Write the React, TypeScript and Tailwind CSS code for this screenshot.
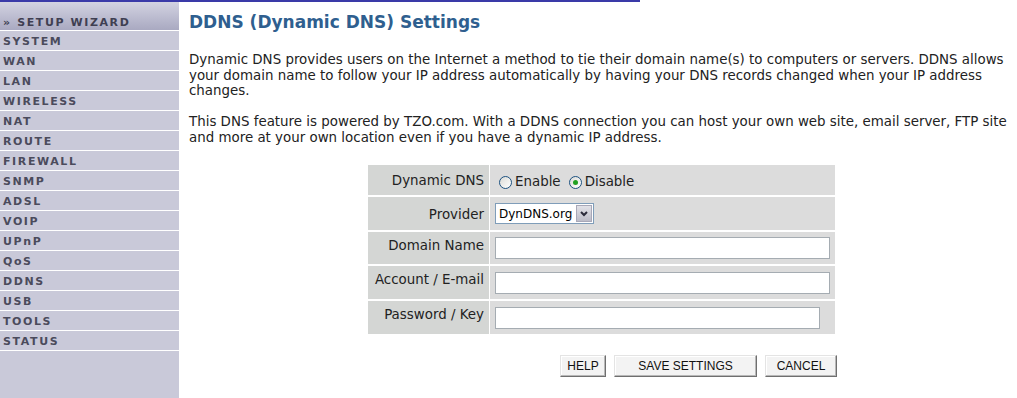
import React from "react";

const menu = [
  "SYSTEM",
  "WAN",
  "LAN",
  "WIRELESS",
  "NAT",
  "ROUTE",
  "FIREWALL",
  "SNMP",
  "ADSL",
  "VOIP",
  "UPnP",
  "QoS",
  "DDNS",
  "USB",
  "TOOLS",
  "STATUS",
];

function Radio({ checked }: { checked?: boolean }) {
  return (
    <span className="inline-flex w-[13px] h-[13px] rounded-full border border-[#1c5180] bg-gradient-to-br from-[#dcdcd7] to-white items-center justify-center mr-[3px]">
      {checked && <span className="w-[5px] h-[5px] rounded-full bg-[#21a121]" />}
    </span>
  );
}

function Btn({ label, w }: { label: string; w: string }) {
  return (
    <button
      className={`${w} h-[22px] bg-[#f3f3f3] border border-t-[#e4e4e4] border-l-[#e4e4e4] border-r-[#6f6f6f] border-b-[#6f6f6f] shadow-[inset_-1px_-1px_0_#b8b8b8,inset_1px_1px_0_#ffffff] text-[12px] text-[#111] font-['Liberation_Sans',Arial,sans-serif]`}
    >
      {label}
    </button>
  );
}

export default function App() {
  return (
    <div className="w-[1017px] h-[398px] bg-white flex font-['DejaVu_Sans',Verdana,sans-serif] overflow-hidden relative">
      <div className="absolute left-0 top-0 w-[640px] h-[2px] bg-[#3a3aa8]" />
      {/* Sidebar */}
      <aside className="w-[179px] h-full bg-[#c9c9d9] flex flex-col shrink-0">
        <div className="h-[31px] bg-gradient-to-b from-[#d6d6e4] to-[#a9a9c1] flex items-end pb-0 pl-[3px] border-b border-white">
          <span className="text-[11px] leading-[15px] font-bold tracking-[1.6px] text-[#3f3f52]">» SETUP WIZARD</span>
        </div>
        {menu.map((m) => (
          <div
            key={m}
            className="h-[20px] border-b border-white flex items-center pt-[3px] pl-[3px] text-[11px] font-bold tracking-[1.6px] text-[#4b4b5c]"
          >
            {m}
          </div>
        ))}
      </aside>

      {/* Main */}
      <main className="flex-1 pl-[10px] pt-[12px]">
        <h1 className="text-[17px] font-bold text-[#2f5f8f] leading-[20px]">DDNS (Dynamic DNS) Settings</h1>
        <p className="mt-[20px] text-[13.4px] leading-[15.5px] text-[#222] w-[828px]">
          Dynamic DNS provides users on the Internet a method to tie their domain name(s) to computers or servers. DDNS allows
          <br />
          your domain name to follow your IP address automatically by having your DNS records changed when your IP address
          <br />
          changes.
        </p>
        <p className="mt-[15.5px] text-[13.4px] leading-[15.5px] text-[#222] w-[828px]">
          This DNS feature is powered by TZO.com. With a DDNS connection you can host your own web site, email server, FTP site
          <br />
          and more at your own location even if you have a dynamic IP address.
        </p>

        <div className="ml-[179px] mt-[20px] w-[467px] flex flex-col gap-[2px] text-[13.4px] text-[#222]">
          <div className="flex h-[30px] gap-[1px]">
            <div className="w-[121px] bg-[#d4d6d4] text-right pr-[5px] pt-[6px]">Dynamic DNS</div>
            <div className="flex-1 bg-[#dcdcdc] flex items-center pl-[9px] pt-[4px]">
              <Radio />
              <span className="mr-[8px]">Enable</span>
              <Radio checked />
              <span>Disable</span>
            </div>
          </div>
          <div className="flex h-[33px] gap-[1px]">
            <div className="w-[121px] bg-[#d4d6d4] text-right pr-[5px] pt-[8px]">Provider</div>
            <div className="flex-1 bg-[#dcdcdc] flex items-center pl-[5px]">
              <div className="flex h-[21px] w-[99px] border border-[#7f9db9] bg-white items-center">
                <span className="flex-1 pl-[3px] text-[12px] text-black">DynDNS.org</span>
                <span className="w-[16px] h-[17px] mr-[1px] bg-gradient-to-b from-[#e2e2e8] to-[#bcbcc8] border border-[#a8a8b8] flex items-center justify-center">
                  <svg width="8" height="6" viewBox="0 0 8 6">
                    <path d="M1 1 L4 4 L7 1" stroke="#2a2a3a" strokeWidth="2" fill="none" />
                  </svg>
                </span>
              </div>
            </div>
          </div>
          {[
            ["Domain Name", "w-[335px]", "h-[32px]"],
            ["Account / E-mail", "w-[335px]", "h-[33px]"],
            ["Password / Key", "w-[325px]", "h-[33px]"],
          ].map(([label, w, h]) => (
            <div key={label} className={`flex ${h} gap-[1px]`}>
              <div className="w-[121px] bg-[#d4d6d4] text-right pr-[5px] pt-[4px]">{label}</div>
              <div className="flex-1 bg-[#dcdcdc] flex items-center pl-[5px]">
                <div className={`${w} h-[22px] bg-white border border-[#a5acb2]`} />
              </div>
            </div>
          ))}
        </div>

        <div className="ml-[371px] mt-[21px] flex gap-[8px]">
          <Btn label="HELP" w="w-[46px]" />
          <Btn label="SAVE SETTINGS" w="w-[143px]" />
          <Btn label="CANCEL" w="w-[72px]" />
        </div>
      </main>
    </div>
  );
}
